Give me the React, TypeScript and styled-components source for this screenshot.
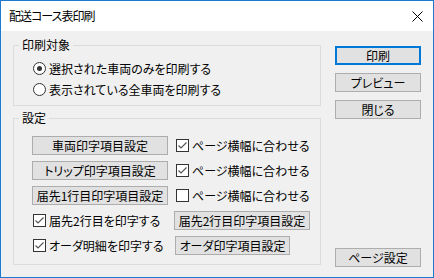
import styled, { createGlobalStyle } from "styled-components";

const GlobalStyle = createGlobalStyle`
  html, body {
    margin: 0;
    padding: 0;
    background: #ffffff;
  }
  * {
    box-sizing: border-box;
  }
`;

const Window = styled.div`
  width: 434px;
  height: 278px;
  border: 1px solid #1c7bd0;
  display: flex;
  flex-direction: column;
  font-family: "Noto Sans CJK JP", "Noto Sans", sans-serif;
  font-feature-settings: "palt";
  font-size: 12px;
  color: #000000;
  overflow: hidden;
`;

const TitleBar = styled.div`
  height: 30px;
  background: #ffffff;
  display: flex;
  align-items: center;
  justify-content: space-between;
  padding: 0 10px 0 8px;
`;

const Title = styled.span`
  font-size: 12px;
  line-height: 12px;
  letter-spacing: -1px;
`;

const Body = styled.div`
  flex: 1;
  background: #f0f0f0;
  display: flex;
  gap: 14px;
  padding: 8px 12px 10px 12px;
`;

const LeftColumn = styled.div`
  width: 308px;
  display: flex;
  flex-direction: column;
  gap: 6px;
`;

const RightColumn = styled.div`
  width: 86px;
  display: flex;
  flex-direction: column;
  gap: 8px;
  padding-top: 7px;
`;

const Group = styled.fieldset`
  margin: 0;
  padding: 0;
  min-width: 0;
  border: 1px solid #dcdcdc;
`;

const Legend = styled.legend`
  margin-left: 5px;
  padding: 0 3px;
  font-size: 12px;
  line-height: 12px;
`;

const GroupInner = styled.div<{ $top: number; $bottom: number; $left: number }>`
  padding: ${(p) => p.$top}px 0 ${(p) => p.$bottom}px ${(p) => p.$left}px;
  display: flex;
  flex-direction: column;
`;

const OptionRow = styled.label<{ $h: number }>`
  height: ${(p) => p.$h}px;
  display: flex;
  align-items: center;
  gap: 3px;
  line-height: 12px;
`;

const SettingsGrid = styled.div`
  display: grid;
  grid-template-columns: 143px 1fr;
  grid-auto-rows: 25px;
  align-items: center;
`;

const Cell = styled.div<{ $shift?: number }>`
  display: flex;
  align-items: center;
  margin-left: ${(p) => p.$shift ?? 0}px;
`;

const Button = styled.button<{ $w?: number; $default?: boolean }>`
  width: ${(p) => (p.$w ? `${p.$w}px` : "100%")};
  height: 19px;
  padding: 0;
  margin: 0;
  background: #e1e1e1;
  border: ${(p) => (p.$default ? "2px solid #0078d7" : "1px solid #adadad")};
  font-family: inherit;
  font-feature-settings: "palt";
  font-size: 12px;
  line-height: 12px;
  color: #000000;
  display: flex;
  align-items: center;
  justify-content: center;
`;

const BottomButton = styled(Button)`
  margin-top: auto;
`;

const RadioCircle = styled.span<{ $checked?: boolean }>`
  width: 13px;
  height: 13px;
  border-radius: 50%;
  border: 1px solid #333333;
  background: #ffffff;
  display: inline-flex;
  align-items: center;
  justify-content: center;
  flex-shrink: 0;

  &::after {
    content: "";
    width: 5px;
    height: 5px;
    border-radius: 50%;
    background: ${(p) => (p.$checked ? "#333333" : "transparent")};
  }
`;

const Box = styled.span`
  width: 13px;
  height: 13px;
  border: 1px solid #333333;
  background: #ffffff;
  display: inline-flex;
  align-items: center;
  justify-content: center;
  flex-shrink: 0;
`;

function CheckBox({ checked }: { checked: boolean }) {
  return (
    <Box>
      {checked && (
        <svg width="11" height="11" viewBox="0 0 11 11">
          <polyline
            points="1.5,5.5 4,8 9.5,2.5"
            fill="none"
            stroke="#555555"
            strokeWidth="1.2"
          />
        </svg>
      )}
    </Box>
  );
}

function CloseIcon() {
  return (
    <svg width="11" height="11" viewBox="0 0 11 11">
      <path d="M0.5 0.5 L10.5 10.5 M10.5 0.5 L0.5 10.5" stroke="#000000" strokeWidth="1" />
    </svg>
  );
}

function Check({ checked, text }: { checked: boolean; text: string }) {
  return (
    <OptionRow $h={25}>
      <CheckBox checked={checked} />
      <span>{text}</span>
    </OptionRow>
  );
}

export default function App() {
  return (
    <>
      <GlobalStyle />
      <Window>
        <TitleBar>
          <Title>配送コース表印刷</Title>
          <CloseIcon />
        </TitleBar>
        <Body>
          <LeftColumn>
            <Group>
              <Legend>印刷対象</Legend>
              <GroupInner $top={7} $bottom={5} $left={19}>
                <OptionRow $h={21}>
                  <RadioCircle $checked />
                  <span>選択された車両のみを印刷する</span>
                </OptionRow>
                <OptionRow $h={21}>
                  <RadioCircle />
                  <span>表示されている全車両を印刷する</span>
                </OptionRow>
              </GroupInner>
            </Group>
            <Group>
              <Legend>設定</Legend>
              <GroupInner $top={9} $bottom={6} $left={18}>
                <SettingsGrid>
                  <Cell>
                    <Button $w={136}>車両印字項目設定</Button>
                  </Cell>
                  <Cell $shift={1}>
                    <Check checked text="ページ横幅に合わせる" />
                  </Cell>
                  <Cell>
                    <Button $w={136}>トリップ印字項目設定</Button>
                  </Cell>
                  <Cell $shift={1}>
                    <Check checked text="ページ横幅に合わせる" />
                  </Cell>
                  <Cell>
                    <Button $w={136}>届先1行目印字項目設定</Button>
                  </Cell>
                  <Cell $shift={1}>
                    <Check checked={false} text="ページ横幅に合わせる" />
                  </Cell>
                  <Cell $shift={1}>
                    <Check checked text="届先2行目を印字する" />
                  </Cell>
                  <Cell $shift={-1}>
                    <Button $w={136}>届先2行目印字項目設定</Button>
                  </Cell>
                  <Cell $shift={1}>
                    <Check checked text="オーダ明細を印字する" />
                  </Cell>
                  <Cell>
                    <Button $w={115}>オーダ印字項目設定</Button>
                  </Cell>
                </SettingsGrid>
              </GroupInner>
            </Group>
          </LeftColumn>
          <RightColumn>
            <Button $default>印刷</Button>
            <Button>プレビュー</Button>
            <Button>閉じる</Button>
            <BottomButton>ページ設定</BottomButton>
          </RightColumn>
        </Body>
      </Window>
    </>
  );
}
